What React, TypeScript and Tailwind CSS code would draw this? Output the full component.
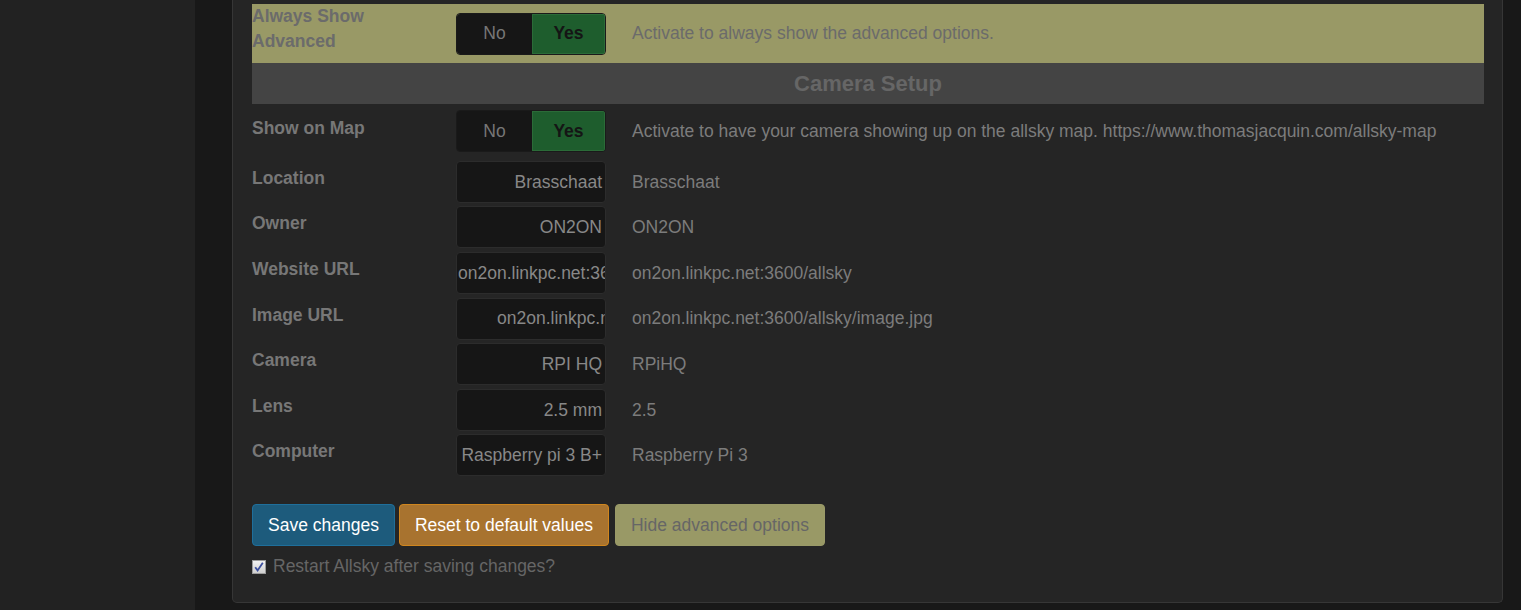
import React from 'react';

type Row = {
  label: string;
  value: string;
  desc: string;
  indent?: boolean;
};

const rows: Row[] = [
  { label: 'Location', value: 'Brasschaat', desc: 'Brasschaat' },
  { label: 'Owner', value: 'ON2ON', desc: 'ON2ON' },
  { label: 'Website URL', value: 'on2on.linkpc.net:3600/allsky', desc: 'on2on.linkpc.net:3600/allsky' },
  { label: 'Image URL', value: 'on2on.linkpc.net:3600/allsky/image.jpg', desc: 'on2on.linkpc.net:3600/allsky/image.jpg', indent: true },
  { label: 'Camera', value: 'RPI HQ', desc: 'RPiHQ' },
  { label: 'Lens', value: '2.5 mm', desc: '2.5' },
  { label: 'Computer', value: 'Raspberry pi 3 B+', desc: 'Raspberry Pi 3' },
];

function Toggle() {
  return (
    <div className="flex h-[42px] w-[150px] overflow-hidden rounded-[4px] border border-[#1a1a1a]">
      <div className="flex w-[75px] items-center justify-center bg-[#161616] text-[#777]">No</div>
      <div className="flex flex-1 items-center justify-center border border-[#2b6b38] bg-[#1e5d2d] font-bold text-[#151515]">
        Yes
      </div>
    </div>
  );
}

function ValueBox({ value, indent }: { value: string; indent?: boolean }) {
  const long = value.length > 20;
  return (
    <div
      className={
        'flex h-[42px] w-[150px] shrink-0 items-center overflow-hidden whitespace-nowrap rounded-[4px] border border-[#2c2c2c] bg-[#161616] text-[#888] ' +
        (indent ? 'pl-[40px]' : long ? 'pl-[1px]' : 'justify-end pr-[3px]')
      }
    >
      {value}
    </div>
  );
}

export default function App() {
  return (
    <div className="flex h-[610px] overflow-hidden bg-[#181818] font-['Liberation_Sans',Arial,sans-serif] text-[17.5px]">
      <aside className="w-[195px] shrink-0 bg-[#222]" />
      <main className="flex-1 pl-[37px] pr-[18px] pb-[7px]">
        <div className="h-full rounded-b-[5px] border border-t-0 border-[#363636] bg-[#252525] pl-[19px] pr-[18px] pt-[4px]">
          {/* advanced toggle */}
          <div className="flex h-[59px] bg-[#999966]">
            <div className="w-[204px] shrink-0 font-bold leading-[25px] text-[#6b6b6b]">
              Always Show
              <br />
              Advanced
            </div>
            <div className="flex items-center">
              <Toggle />
            </div>
            <div className="flex items-center pl-[26px] text-[#6b6b6b]">Activate to always show the advanced options.</div>
          </div>

          <div className="flex h-[41px] items-center justify-center bg-[#444] text-[22px] font-bold text-[#666]">
            Camera Setup
          </div>

          <div className="flex pt-[6px] pb-[7px]">
            <div className="w-[204px] shrink-0 pt-[6px] font-bold leading-[25px] text-[#777]">Show on Map</div>
            <Toggle />
            <div className="flex items-center pl-[26px] pt-[1px] text-[#7c7c7c]">
              Activate to have your camera showing up on the allsky map. https://www.thomasjacquin.com/allsky-map
            </div>
          </div>

          {rows.map((r) => (
            <div key={r.label} className="flex py-[1.8px]">
              <div className="w-[204px] shrink-0 pt-[5px] font-bold leading-[25px] text-[#777]">{r.label}</div>
              <ValueBox value={r.value} indent={r.indent} />
              <div className="flex items-center pl-[26px] text-[#7c7c7c]">{r.desc}</div>
            </div>
          ))}

          <div className="mt-[26px] flex gap-[4px]">
            <button className="h-[42px] rounded-[4px] border border-[#1f6f9b] bg-[#1d5b7c] px-[15px] text-white">
              Save changes
            </button>
            <button className="h-[42px] rounded-[4px] border border-[#d0861e] bg-[#a8732f] px-[15px] text-white">
              Reset to default values
            </button>
            <button className="ml-[2px] h-[42px] rounded-[4px] border border-[#9a9a68] bg-[#999966] px-[15px] text-[#666]">
              Hide advanced options
            </button>
          </div>

          <label className="mt-[8px] flex items-center gap-[7px] leading-[25px] text-[#666]">
            <span className="flex h-[14px] w-[14px] items-center justify-center border border-[#9c9c9c] bg-gradient-to-b from-[#f2f2f2] to-[#cfcfcf]">
              <svg viewBox="0 0 12 12" className="h-[12px] w-[12px]">
                <path d="M2.2 6.2 L4.6 9.4 L9.8 1.8" fill="none" stroke="#3c4f9e" strokeWidth="1.8" />
              </svg>
            </span>
            Restart Allsky after saving changes?
          </label>
        </div>
      </main>
    </div>
  );
}
